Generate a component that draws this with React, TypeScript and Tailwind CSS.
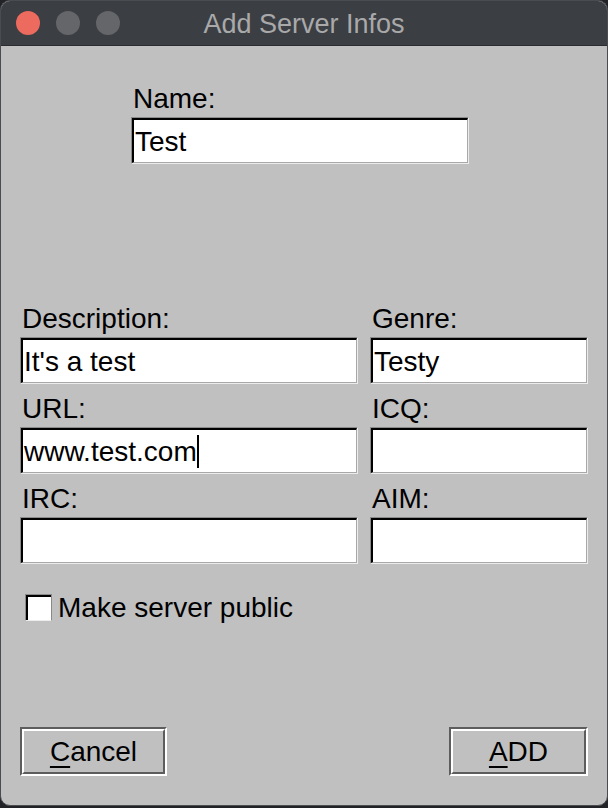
import React from "react";

const font = { fontFamily: '"Liberation Sans", Arial, sans-serif' };

const Field = ({ value = "", caret = false, className = "" }: { value?: string; caret?: boolean; className?: string }) => (
  <div className={`h-[47px] border border-t-[#8a8a8a] border-l-[#8a8a8a] border-b-[#ececec] border-r-[#ececec] ${className}`}>
    <div className="h-full flex items-center bg-white border-t-2 border-l-2 border-b border-r border-t-black border-l-black border-b-[#a8a8a8] border-r-[#a8a8a8] pl-[1px] pt-[1px] text-[28px] text-black leading-none">
      <span>{value}</span>
      {caret && <span className="w-[2px] h-[33px] bg-black"></span>}
    </div>
  </div>
);

const Label = ({ children, className = "" }: { children: React.ReactNode; className?: string }) => (
  <div className={`text-[28px] leading-[31px] text-black pl-[2px] mb-[3px] pt-[2px] ${className}`}>{children}</div>
);

const Button = ({ hot, rest, className = "" }: { hot: string; rest: string; className?: string }) => (
  <button className={`h-[49px] border-2 border-t-[#5d5d5d] border-l-[#5d5d5d] border-b-white border-r-white ${className}`}>
    <div className="h-full flex items-center justify-center border-2 border-t-white border-l-white border-b-[#5d5d5d] border-r-[#5d5d5d] text-[28px] text-black">
      <span className="underline underline-offset-[5px] decoration-[2px]">{hot}</span>
      <span>{rest}</span>
    </div>
  </button>
);

export default function App() {
  return (
    <div className="w-[608px] h-[808px] bg-[#222326]" style={font}>
      <div className="w-[608px] h-[806px] rounded-[10px] overflow-hidden border border-[#4a4c50] bg-[#c0c0c0] flex flex-col">
        <div className="h-[45px] shrink-0 bg-[#3b3e43] border-b border-[#2a2c30] grid grid-cols-[1fr_auto_1fr] items-center">
          <div className="flex items-center gap-[16px] pl-[15px]">
            <span className="w-[24px] h-[24px] rounded-full bg-[#ec6a5e]"></span>
            <span className="w-[24px] h-[24px] rounded-full bg-[#656669]"></span>
            <span className="w-[24px] h-[24px] rounded-full bg-[#656669]"></span>
          </div>
          <div className="text-[27px] text-[#a9a9aa] leading-none pt-[3px]">Add Server Infos</div>
          <div></div>
        </div>

        <div className="flex-1 flex flex-col px-[19px]">
          <div className="mt-[35px] ml-[111px] w-[338px]">
            <Label>Name:</Label>
            <Field value="Test" />
          </div>

          <div className="mt-[137px] grid grid-cols-[338px_218px] gap-x-[12px]">
            <div>
              <Label>Description:</Label>
              <Field value="It's a test" />
            </div>
            <div>
              <Label>Genre:</Label>
              <Field value="Testy" />
            </div>
            <div className="mt-[7px]">
              <Label>URL:</Label>
              <Field value="www.test.com" caret />
            </div>
            <div className="mt-[7px]">
              <Label>ICQ:</Label>
              <Field />
            </div>
            <div className="mt-[7px]">
              <Label>IRC:</Label>
              <Field />
            </div>
            <div className="mt-[7px]">
              <Label>AIM:</Label>
              <Field />
            </div>
          </div>

          <div className="mt-[28px] ml-[5px] flex items-center gap-[6px]">
            <div className="w-[27px] h-[27px] border border-t-[#8a8a8a] border-l-[#8a8a8a] border-b-[#ececec] border-r-[#8a8a8a]">
              <div className="w-full h-full bg-white border-t-2 border-l-2 border-t-black border-l-black"></div>
            </div>
            <span className="text-[28px] leading-[31px] text-black">Make server public</span>
          </div>

          <div className="mt-auto mb-[29px] flex justify-between">
            <Button hot="C" rest="ancel" className="w-[147px]" />
            <Button hot="A" rest="DD" className="w-[139px]" />
          </div>
        </div>
      </div>
    </div>
  );
}
